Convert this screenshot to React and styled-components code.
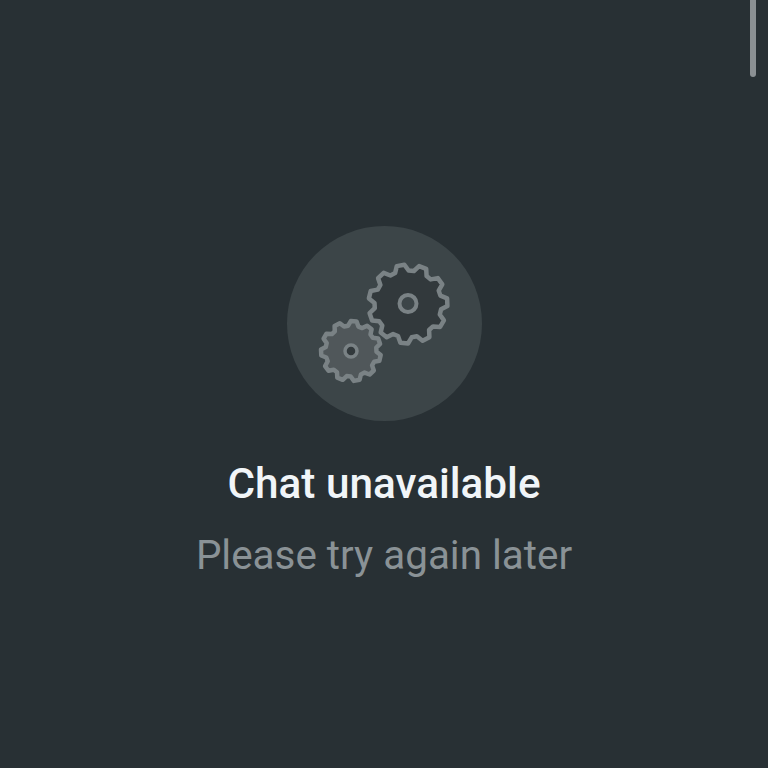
import React from 'react'
import styled, { createGlobalStyle } from 'styled-components'

const GlobalStyle = createGlobalStyle`
    html, body {
        margin: 0;
        padding: 0;
        background: #283034;
    }
`
const Screen = styled.div`
    position: relative;
    width: 768px;
    height: 768px;
    overflow: hidden;
    display: flex;
    flex-direction: column;
    align-items: center;
    padding-top: 226px;
    box-sizing: border-box;
    background: #283034;
    font-family: Roboto, "Liberation Sans", sans-serif;
`
const Scrollbar = styled.div`
    position: absolute;
    top: 0;
    right: 12px;
    width: 6px;
    height: 77px;
    border-radius: 0 0 3px 3px;
    background: #8b9093;
`
const Badge = styled.div`
    width: 195px;
    height: 195px;
    border-radius: 50%;
    background: #3c4548;
`
const Title = styled.div`
    margin-top: 38px;
    height: 50px;
    line-height: 50px;
    font-size: 42.3px;
    font-weight: 500;
    color: #f1f5f8;
`
const Subtitle = styled.div`
    margin-top: 22px;
    height: 50px;
    line-height: 50px;
    font-size: 40.4px;
    font-weight: 400;
    color: #8a9296;
`

// builds a cog outline around (cx, cy), teeth are wide low trapezoids
const gearPath = (cx, cy, outer, inner, teeth, start) => {
    const step = (Math.PI * 2) / teeth
    const pts = []
    for (let i = 0; i < teeth; i++) {
        const a = start + i * step
        const offsets = [[-0.36, inner], [-0.17, outer], [0.17, outer], [0.36, inner]]
        offsets.forEach(([o, r]) => {
            const t = a + o * step
            pts.push(`${(cx + r * Math.cos(t)).toFixed(1)} ${(cy + r * Math.sin(t)).toFixed(1)}`)
        })
    }
    return `M${pts.join('L')}Z`
}

const Gears = () => (
    <svg width="195" height="195" viewBox="287 226 195 195">
        <g stroke="#7a8285" strokeLinejoin="round" strokeWidth="4.5">
            <path d={gearPath(408, 304, 39.5, 33.5, 11, -1.76)} fill="#32393c" />
            <path d={gearPath(351, 351, 30, 25.5, 11, -1.48)} fill="#50575a" />
            <circle cx="408" cy="303.5" r="8.5" fill="#3c4548" strokeWidth="4" />
            <circle cx="351" cy="351" r="6" fill="#32393c" strokeWidth="3.5" />
        </g>
    </svg>
)

export default function App() {
    return (
        <Screen>
            <GlobalStyle />
            <Scrollbar />
            <Badge>
                <Gears />
            </Badge>
            <Title>Chat unavailable</Title>
            <Subtitle>Please try again later</Subtitle>
        </Screen>
    )
}
